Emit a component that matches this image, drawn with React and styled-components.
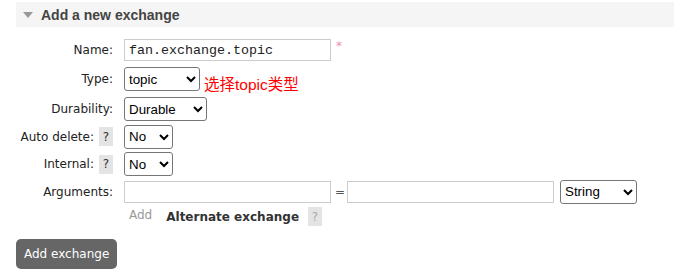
import React from 'react';
import styled, { createGlobalStyle } from 'styled-components';

const Global = createGlobalStyle`
  body {
    margin: 0;
    background: #fff;
    font-family: "DejaVu Sans", Verdana, sans-serif;
    font-size: 12px;
    color: #222;
  }
`;

const Page = styled.div`
  padding: 2px 0 0 16px;
`;

const Header = styled.div`
  display: flex;
  align-items: center;
  height: 25px;
  background: #f5f5f5;
  padding-left: 7px;
  gap: 8px;
`;

const Arrow = styled.span`
  width: 0;
  height: 0;
  border-left: 5px solid transparent;
  border-right: 5px solid transparent;
  border-top: 6px solid #999;
  margin-top: 1px;
`;

const Title = styled.h2`
  margin: 0;
  font-family: "Liberation Sans", Arial, sans-serif;
  font-size: 14px;
  font-weight: bold;
  color: #444;
`;

const Form = styled.div`
  display: grid;
  grid-template-columns: 97px auto;
  column-gap: 11px;
  row-gap: 3.5px;
  margin-top: 12px;
  align-items: center;
`;

const Label = styled.label`
  display: flex;
  justify-content: flex-end;
  align-items: center;
  gap: 5px;
  white-space: nowrap;
  color: #222;
`;

const Help = styled.span`
  display: inline-flex;
  align-items: center;
  justify-content: center;
  width: 14px;
  height: 19px;
  background: #e4e4e4;
  color: ${(p) => (p.faded ? '#aaa' : '#333')};
  font-size: 12px;
`;

const Cell = styled.div`
  display: flex;
  align-items: center;
  gap: 4px;
`;

const TextInput = styled.input`
  box-sizing: border-box;
  width: 207px;
  height: 22px;
  border: 1px solid #ccc;
  padding: 0 4px;
  font-family: "Liberation Mono", "Courier New", monospace;
  font-size: 13.33px;
  color: #222;
  outline: none;
`;

const Select = styled.select`
  box-sizing: border-box;
  width: ${(p) => p.w}px;
  height: 24px;
  margin-left: ${(p) => p.shift || 0}px;
  font-family: "Liberation Sans", Arial, sans-serif;
  font-size: 13.33px;
  color: #000;
  border: 1px solid #767676;
  border-radius: 3px;
  background: #fff;
`;

const Star = styled.span`
  color: #f08cb0;
  font-size: 12px;
  align-self: flex-start;
  margin-left: 1px;
`;

const Note = styled.span`
  color: #f00;
  font-family: "Liberation Sans", "Noto Sans CJK SC", sans-serif;
  font-size: 15.5px;
  margin-top: 7px;
`;

const Equals = styled.span`
  width: 8px;
  color: #555;
`;

const Extra = styled.div`
  grid-column: 2;
  display: flex;
  align-items: center;
  padding-left: 5px;
`;

const AddLink = styled.span`
  color: #999;
  margin-right: 14px;
  margin-top: -3px;
`;

const Alt = styled.span`
  font-weight: bold;
  font-size: 12px;
  color: #333;
  margin-right: 9px;
`;

const Button = styled.button`
  margin-top: 13px;
  height: 30px;
  padding: 0 8px;
  background: #666;
  color: #fff;
  border: none;
  border-radius: 5px;
  font-family: "DejaVu Sans", Verdana, sans-serif;
  font-size: 12px;
`;

export default function App() {
  return (
    <Page>
      <Global />
      <Header>
        <Arrow />
        <Title>Add a new exchange</Title>
      </Header>
      <Form>
        <Label>Name:</Label>
        <Cell>
          <TextInput defaultValue="fan.exchange.topic" />
          <Star>*</Star>
        </Cell>

        <Label>Type:</Label>
        <Cell>
          <Select w={76} defaultValue="topic">
            <option>direct</option>
            <option>fanout</option>
            <option>headers</option>
            <option>topic</option>
          </Select>
          <Note>选择topic类型</Note>
        </Cell>

        <Label>Durability:</Label>
        <Cell>
          <Select w={83} defaultValue="Durable">
            <option>Durable</option>
            <option>Transient</option>
          </Select>
        </Cell>

        <Label>
          Auto delete: <Help>?</Help>
        </Label>
        <Cell>
          <Select w={49} defaultValue="No">
            <option>No</option>
            <option>Yes</option>
          </Select>
        </Cell>

        <Label>
          Internal: <Help>?</Help>
        </Label>
        <Cell>
          <Select w={49} defaultValue="No">
            <option>No</option>
            <option>Yes</option>
          </Select>
        </Cell>

        <Label>Arguments:</Label>
        <Cell>
          <TextInput />
          <Equals>=</Equals>
          <TextInput />
          <Select w={77} shift={2} defaultValue="String">
            <option>String</option>
            <option>Number</option>
            <option>Boolean</option>
            <option>List</option>
          </Select>
        </Cell>

        <Extra>
          <AddLink>Add</AddLink>
          <Alt>Alternate exchange</Alt>
          <Help faded>?</Help>
        </Extra>
      </Form>
      <Button>Add exchange</Button>
    </Page>
  );
}
